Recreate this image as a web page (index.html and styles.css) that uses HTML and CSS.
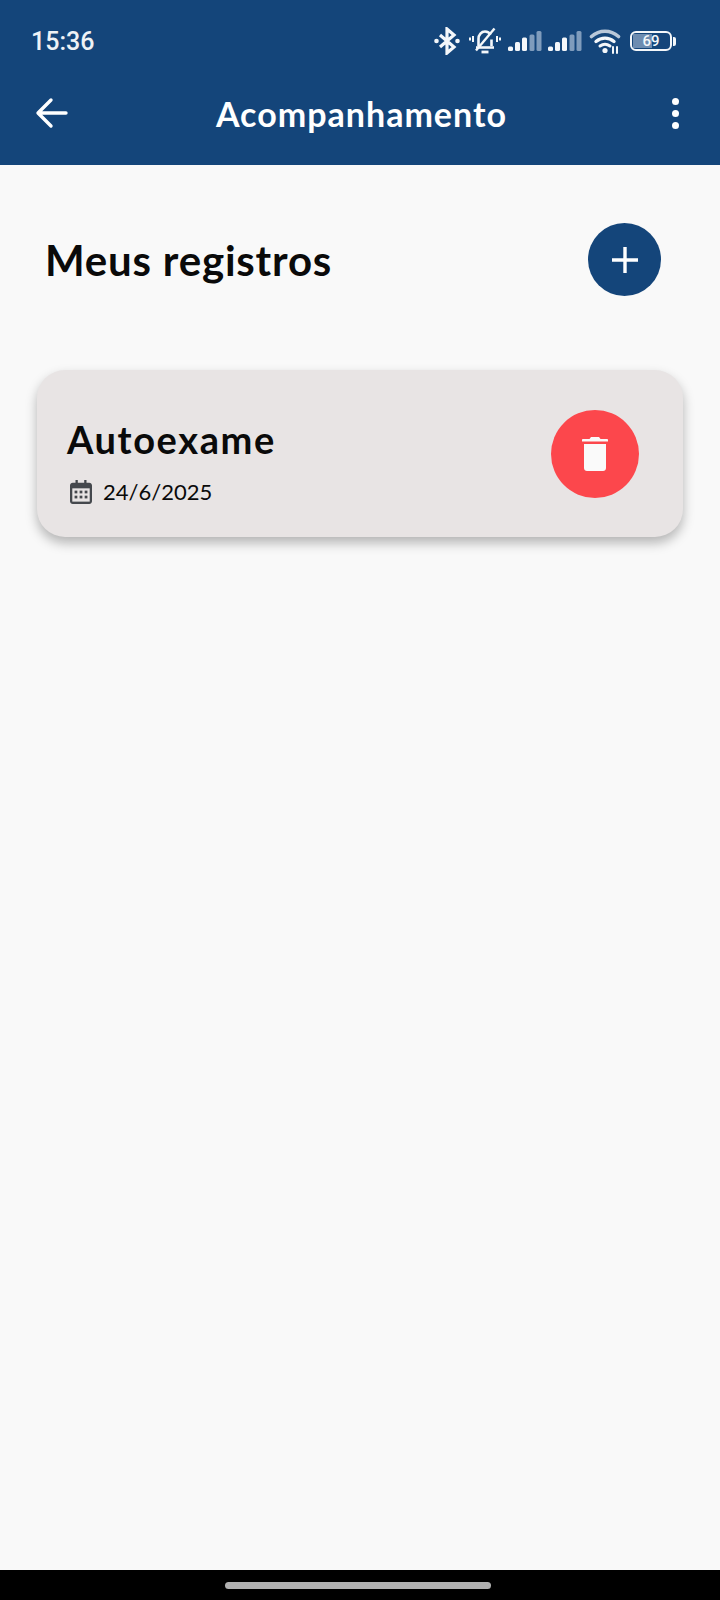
FILE: index.html
```html
<!DOCTYPE html>
<html lang="pt-BR">
<head>
	<meta charset="UTF-8">
	<title>Acompanhamento</title>
	<link rel="stylesheet" href="styles.css">
</head>
<body>
	<header class="topbar">
		<div class="status">
			<span class="time">15:36</span>
			<div class="status-icons">
				<!-- bluetooth -->
				<svg class="ic-bt" width="26" height="28" viewBox="0 0 26 28" fill="none" stroke="#f4f7fa" stroke-width="3.2">
					<path d="M6 8l14 12-7 6V2l7 6L6 20"/>
					<circle cx="2.500" cy="14" r="2.300" fill="#f4f7fa" stroke="none"/>
					<circle cx="23.500" cy="14" r="2.300" fill="#f4f7fa" stroke="none"/>
				</svg>
				<!-- sino mudo -->
				<svg class="ic-bell" width="32" height="28" viewBox="0 0 32 28" fill="none" stroke="#f4f7fa" stroke-width="2.600">
					<path d="M9.500 19V12c0-4.500 3-7.500 6.500-7.500 2.500 0 4.500 1.200 5.700 3.200M22.500 12.500V19"/>
					<path d="M7 20.500h18"/>
					<path d="M12.500 25h7" stroke-width="2.800"/>
					<path d="M7 23.500L25.500 1.500" stroke-width="2.400"/>
					<path d="M4 9v6M1 10.500v3M28 9v6M31 10.500v3" stroke-width="2"/>
				</svg>
				<svg class="ic-signal" width="34" height="22" viewBox="0 0 34 22">
					<rect x="0" y="16.500" width="5" height="4.500" rx="1.500" fill="#f4f7fa"/>
					<rect x="7" y="12" width="5" height="9" rx="1.500" fill="#f4f7fa"/>
					<rect x="14" y="7.500" width="5" height="13.500" rx="1.500" fill="#f4f7fa"/>
					<rect x="21.500" y="4.500" width="5" height="16.500" rx="1.500" fill="#7f9cbc"/>
					<rect x="28.500" y="1" width="5" height="20" rx="1.500" fill="#7f9cbc"/>
				</svg>
				<svg class="ic-signal" width="34" height="22" viewBox="0 0 34 22">
					<rect x="0" y="16.500" width="5" height="4.500" rx="1.500" fill="#f4f7fa"/>
					<rect x="7" y="12" width="5" height="9" rx="1.500" fill="#f4f7fa"/>
					<rect x="14" y="7.500" width="5" height="13.500" rx="1.500" fill="#f4f7fa"/>
					<rect x="21.500" y="4.500" width="5" height="16.500" rx="1.500" fill="#7f9cbc"/>
					<rect x="28.500" y="1" width="5" height="20" rx="1.500" fill="#7f9cbc"/>
				</svg>
				<!-- wifi -->
				<svg class="ic-wifi" width="32" height="26" viewBox="0 0 32 26" fill="none" stroke="#f4f7fa" stroke-linecap="round">
					<path d="M2.500 8.500c8-7 19-7 27 0" stroke="#b9c8d9" stroke-width="3.600"/>
					<path d="M7 13.500c5.500-4.500 12.500-4.500 18 0" stroke-width="3.400"/>
					<path d="M11 18c3-2.200 7-2.200 10 0" stroke-width="3"/>
					<circle cx="16" cy="22.500" r="2.600" fill="#f4f7fa" stroke="none"/>
					<path d="M24 19v6M28 19v6" stroke-width="2"/>
				</svg>
				<div class="battery">
					<div class="battery-body">
						<span class="battery-fill"></span>
						<span class="battery-num">69</span>
					</div>
					<span class="battery-tip"></span>
				</div>
			</div>
		</div>
		<div class="appbar">
			<svg class="ic-back" width="34" height="34" viewBox="0 0 34 34" fill="none" stroke="#fff" stroke-width="3.400" stroke-linecap="round" stroke-linejoin="round">
				<path d="M31 17H4M16 4L3 17l13 13"/>
			</svg>
			<h1 class="appbar-title">Acompanhamento</h1>
			<div class="dots">
				<span></span>
				<span></span>
				<span></span>
			</div>
		</div>
	</header>

	<main class="content">
		<section class="section-head">
			<h2 class="section-title">Meus registros</h2>
			<button class="btn-add">
				<svg width="28" height="28" viewBox="0 0 28 28" fill="none" stroke="#fff" stroke-width="3.400">
					<path d="M14 1v26M1 14h26"/>
				</svg>
			</button>
		</section>

		<article class="card">
			<div class="card-info">
				<h3 class="card-title">Autoexame</h3>
				<div class="card-date">
					<svg width="22" height="24" viewBox="0 0 24 26">
						<path fill="#45484d" d="M6 0h2.500v3h7V0H18v3h3c1.600 0 3 1.400 3 3v17c0 1.600-1.400 3-3 3H3c-1.600 0-3-1.400-3-3V6c0-1.600 1.400-3 3-3h3z"/>
						<rect x="2.500" y="9" width="19" height="14.500" fill="#e8e4e4"/>
						<g fill="#45484d">
							<rect x="5" y="11.500" width="3" height="3"/>
							<rect x="10.500" y="11.500" width="3" height="3"/>
							<rect x="16" y="11.500" width="3" height="3"/>
							<rect x="5" y="17" width="3" height="3"/>
							<rect x="10.500" y="17" width="3" height="3"/>
							<rect x="16" y="17" width="3" height="3"/>
						</g>
					</svg>
					<span>24/6/2025</span>
				</div>
			</div>
			<button class="btn-delete">
				<svg width="26" height="34" viewBox="0 0 26 34" fill="#fafafa">
					<path d="M9 0h8l1.500 2H25c.6 0 1 .5 1 1v1.500H0V3c0-.5.4-1 1-1h6.500z"/>
					<path d="M2 7h22v24c0 1.700-1.300 3-3 3H5c-1.700 0-3-1.300-3-3z"/>
				</svg>
			</button>
		</article>
	</main>

	<footer class="navbar">
		<span class="nav-pill"></span>
	</footer>
</body>
</html>
```

FILE: styles.css
```css
* {
	box-sizing: border-box;
}
html, body {
	height: 100%;
}
body {
	background: #f9f9f9;
	color: #0a0a0a;
	display: flex;
	flex-direction: column;
	font-family: "Lato", "Noto Sans", sans-serif;
	height: 1600px;
	margin: 0;
	overflow: hidden;
}
h1, h2, h3 {
	margin: 0;
}
button {
	align-items: center;
	border: 0;
	border-radius: 50%;
	display: flex;
	justify-content: center;
	padding: 0;
}

/* Barra superior */
.topbar {
	background: #14457a;
	color: #fff;
	flex: none;
	height: 165px;
}
.status {
	align-items: center;
	display: flex;
	height: 82px;
	justify-content: space-between;
	padding: 0 44px 0 31px;
}
.time {
	color: #eef2f6;
	font: 500 25px "Roboto", sans-serif;
}
.status-icons {
	align-items: center;
	display: flex;
}
.ic-bt {
	margin-right: 9px;
}
.ic-bell {
	margin-right: 7px;
}
.ic-signal {
	margin-right: 6px;
}
.ic-wifi {
	margin: 0 9px 0 1px;
}
.battery {
	align-items: center;
	display: flex;
}
.battery-body {
	align-items: center;
	border: 2px solid #f4f7fa;
	border-radius: 6px;
	display: flex;
	height: 20px;
	justify-content: center;
	overflow: hidden;
	position: relative;
	width: 42px;
}
.battery-fill {
	background: #6d8cb0;
	bottom: 1px;
	left: 1px;
	position: absolute;
	top: 1px;
	width: 19px;
}
.battery-num {
	color: #f4f7fa;
	font: 500 15px "Roboto", sans-serif;
	position: relative;
}
.battery-tip {
	background: #f4f7fa;
	border-radius: 0 2px 2px 0;
	height: 9px;
	margin-left: 1px;
	width: 3px;
}
.appbar {
	align-items: center;
	display: flex;
	height: 62px;
	justify-content: space-between;
	padding: 0 41px 0 35px;
}
.appbar-title {
	flex: 1;
	font-size: 34px;
	font-weight: 700;
	letter-spacing: 1px;
	padding-right: 18px;
	text-align: center;
}
.dots {
	display: flex;
	flex-direction: column;
	gap: 5px;
}
.dots span {
	background: #fff;
	border-radius: 50%;
	display: block;
	height: 7px;
	width: 7px;
}

/* Conteudo */
.content {
	flex: 1;
	padding: 58px 37px 0;
}
.section-head {
	align-items: center;
	display: flex;
	justify-content: space-between;
	padding: 0 22px 0 8px;
}
.section-title {
	font-size: 42px;
	font-weight: 700;
	letter-spacing: 0.8px;
}
.btn-add {
	background: #14457a;
	height: 73px;
	width: 73px;
}
.card {
	align-items: center;
	background: #e8e4e4;
	border-radius: 28px;
	box-shadow: 0 6px 12px rgba(0, 0, 0, 0.28);
	display: flex;
	height: 167px;
	justify-content: space-between;
	margin-top: 74px;
	padding: 0 44px 0 30px;
}
.card-info {
	padding-top: 14px;
}
.card-title {
	font-size: 38px;
	font-weight: 700;
	letter-spacing: 1.6px;
}
.card-date {
	align-items: center;
	display: flex;
	font-size: 22px;
	gap: 11px;
	margin: 16px 0 0 3px;
}
.btn-delete {
	background: #fc474c;
	height: 88px;
	width: 88px;
}

/* Barra de navegacao */
.navbar {
	align-items: center;
	background: #000;
	display: flex;
	flex: none;
	height: 30px;
	justify-content: center;
}
.nav-pill {
	background: #b0b0b0;
	border-radius: 4px;
	height: 7px;
	margin-right: 4px;
	width: 266px;
}
```
